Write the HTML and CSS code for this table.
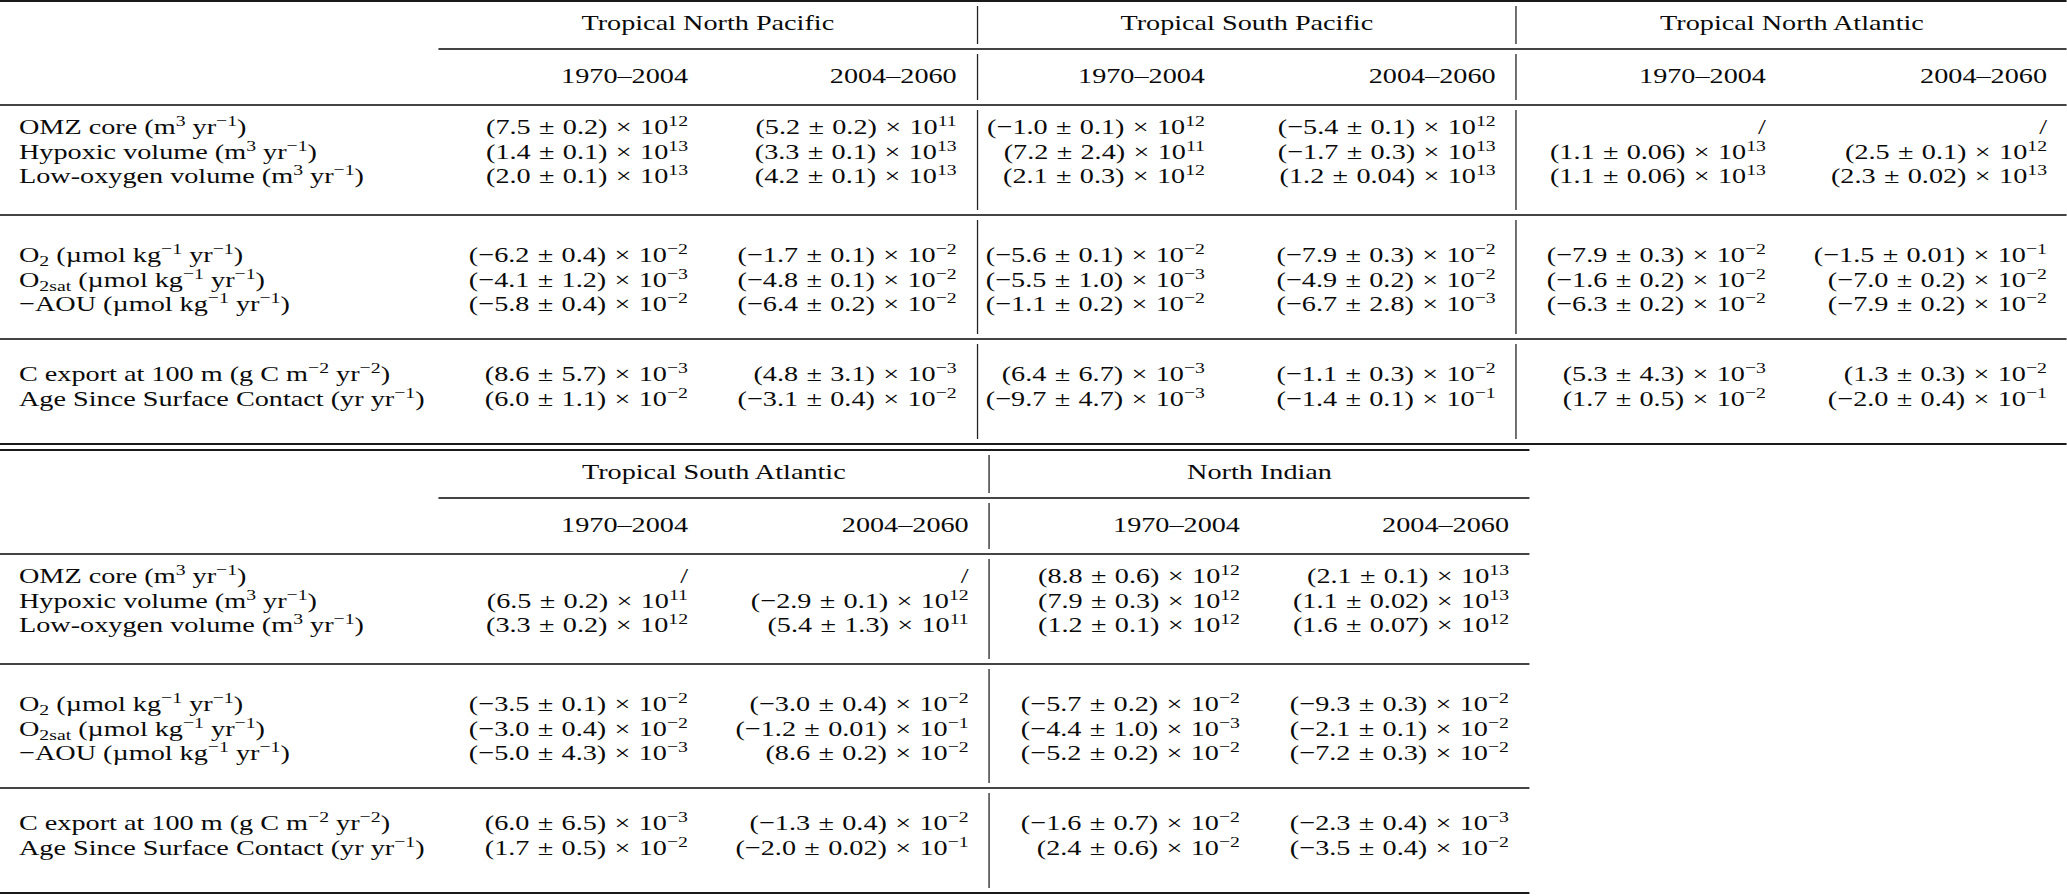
FILE: index.html
```html
<!DOCTYPE html>
<html lang="en">
<head>
<meta charset="utf-8">
<title>Trends by region</title>
<link rel="stylesheet" href="styles.css">
</head>
<body>
<main class="page">
<table class="tbl t1">
  <colgroup>
    <col class="w439"><col class="w269"><col class="w270"><col class="w247"><col class="w292"><col class="w269"><col class="w281">
  </colgroup>
  <tbody>
    <tr class="rl"><td class="rc rc-top" colspan="7"><div class="ln ln-heavy"></div></td></tr>
    <tr class="r-grp"><th class="lab"></th><th class="grp bar" colspan="2">Tropical North Pacific</th><th class="grp bar" colspan="2">Tropical South Pacific</th><th class="grp" colspan="2">Tropical North Atlantic</th></tr>
    <tr class="rl"><td class="rc"></td><td class="rc" colspan="6"><div class="ln"></div></td></tr>
    <tr class="r-yr"><th class="lab"></th><th>1970–2004</th><th class="bar">2004–2060</th><th>1970–2004</th><th class="bar">2004–2060</th><th>1970–2004</th><th>2004–2060</th></tr>
    <tr class="rl"><td class="rc" colspan="7"><div class="ln"></div></td></tr>

    <tr class="g1-start"><td class="lab">OMZ core (m<sup>3</sup> yr<sup>−1</sup>)</td><td>(7.5 ± 0.2) × 10<sup>12</sup></td><td class="bar">(5.2 ± 0.2) × 10<sup>11</sup></td><td>(−1.0 ± 0.1) × 10<sup>12</sup></td><td class="bar">(−5.4 ± 0.1) × 10<sup>12</sup></td><td>/</td><td>/</td></tr>
    <tr><td class="lab">Hypoxic volume (m<sup>3</sup> yr<sup>−1</sup>)</td><td>(1.4 ± 0.1) × 10<sup>13</sup></td><td class="bar">(3.3 ± 0.1) × 10<sup>13</sup></td><td>(7.2 ± 2.4) × 10<sup>11</sup></td><td class="bar">(−1.7 ± 0.3) × 10<sup>13</sup></td><td>(1.1 ± 0.06) × 10<sup>13</sup></td><td>(2.5 ± 0.1) × 10<sup>12</sup></td></tr>
    <tr class="g1-end"><td class="lab">Low-oxygen volume (m<sup>3</sup> yr<sup>−1</sup>)</td><td>(2.0 ± 0.1) × 10<sup>13</sup></td><td class="bar">(4.2 ± 0.1) × 10<sup>13</sup></td><td>(2.1 ± 0.3) × 10<sup>12</sup></td><td class="bar">(1.2 ± 0.04) × 10<sup>13</sup></td><td>(1.1 ± 0.06) × 10<sup>13</sup></td><td>(2.3 ± 0.02) × 10<sup>13</sup></td></tr>
    <tr class="rl"><td class="rc" colspan="7"><div class="ln"></div></td></tr>

    <tr class="g2-start"><td class="lab">O<sub>2</sub> (µmol kg<sup>−1</sup> yr<sup>−1</sup>)</td><td>(−6.2 ± 0.4) × 10<sup>−2</sup></td><td class="bar">(−1.7 ± 0.1) × 10<sup>−2</sup></td><td>(−5.6 ± 0.1) × 10<sup>−2</sup></td><td class="bar">(−7.9 ± 0.3) × 10<sup>−2</sup></td><td>(−7.9 ± 0.3) × 10<sup>−2</sup></td><td>(−1.5 ± 0.01) × 10<sup>−1</sup></td></tr>
    <tr><td class="lab">O<sub>2sat</sub> (µmol kg<sup>−1</sup> yr<sup>−1</sup>)</td><td>(−4.1 ± 1.2) × 10<sup>−3</sup></td><td class="bar">(−4.8 ± 0.1) × 10<sup>−2</sup></td><td>(−5.5 ± 1.0) × 10<sup>−3</sup></td><td class="bar">(−4.9 ± 0.2) × 10<sup>−2</sup></td><td>(−1.6 ± 0.2) × 10<sup>−2</sup></td><td>(−7.0 ± 0.2) × 10<sup>−2</sup></td></tr>
    <tr class="g2-end"><td class="lab">−AOU (µmol kg<sup>−1</sup> yr<sup>−1</sup>)</td><td>(−5.8 ± 0.4) × 10<sup>−2</sup></td><td class="bar">(−6.4 ± 0.2) × 10<sup>−2</sup></td><td>(−1.1 ± 0.2) × 10<sup>−2</sup></td><td class="bar">(−6.7 ± 2.8) × 10<sup>−3</sup></td><td>(−6.3 ± 0.2) × 10<sup>−2</sup></td><td>(−7.9 ± 0.2) × 10<sup>−2</sup></td></tr>
    <tr class="rl"><td class="rc" colspan="7"><div class="ln"></div></td></tr>

    <tr class="g3-start"><td class="lab">C export at 100 m (g C m<sup>−2</sup> yr<sup>−2</sup>)</td><td>(8.6 ± 5.7) × 10<sup>−3</sup></td><td class="bar">(4.8 ± 3.1) × 10<sup>−3</sup></td><td>(6.4 ± 6.7) × 10<sup>−3</sup></td><td class="bar">(−1.1 ± 0.3) × 10<sup>−2</sup></td><td>(5.3 ± 4.3) × 10<sup>−3</sup></td><td>(1.3 ± 0.3) × 10<sup>−2</sup></td></tr>
    <tr class="g3-end"><td class="lab">Age Since Surface Contact (yr yr<sup>−1</sup>)</td><td>(6.0 ± 1.1) × 10<sup>−2</sup></td><td class="bar">(−3.1 ± 0.4) × 10<sup>−2</sup></td><td>(−9.7 ± 4.7) × 10<sup>−3</sup></td><td class="bar">(−1.4 ± 0.1) × 10<sup>−1</sup></td><td>(1.7 ± 0.5) × 10<sup>−2</sup></td><td>(−2.0 ± 0.4) × 10<sup>−1</sup></td></tr>
    <tr class="rl"><td class="rc rc-bot" colspan="7"><div class="ln ln-heavy"></div></td></tr>
  </tbody>
</table>

<table class="tbl t2">
  <colgroup>
    <col class="w439"><col class="w269"><col class="w282"><col class="w270"><col class="w269">
  </colgroup>
  <tbody>
    <tr class="rl"><td class="rc rc-top" colspan="5"><div class="ln ln-heavy"></div></td></tr>
    <tr class="r-grp"><th class="lab"></th><th class="grp bar" colspan="2">Tropical South Atlantic</th><th class="grp" colspan="2">North Indian</th></tr>
    <tr class="rl"><td class="rc"></td><td class="rc" colspan="4"><div class="ln"></div></td></tr>
    <tr class="r-yr"><th class="lab"></th><th>1970–2004</th><th class="bar">2004–2060</th><th>1970–2004</th><th>2004–2060</th></tr>
    <tr class="rl"><td class="rc" colspan="5"><div class="ln"></div></td></tr>

    <tr class="g1-start"><td class="lab">OMZ core (m<sup>3</sup> yr<sup>−1</sup>)</td><td>/</td><td class="bar">/</td><td>(8.8 ± 0.6) × 10<sup>12</sup></td><td>(2.1 ± 0.1) × 10<sup>13</sup></td></tr>
    <tr><td class="lab">Hypoxic volume (m<sup>3</sup> yr<sup>−1</sup>)</td><td>(6.5 ± 0.2) × 10<sup>11</sup></td><td class="bar">(−2.9 ± 0.1) × 10<sup>12</sup></td><td>(7.9 ± 0.3) × 10<sup>12</sup></td><td>(1.1 ± 0.02) × 10<sup>13</sup></td></tr>
    <tr class="g1-end"><td class="lab">Low-oxygen volume (m<sup>3</sup> yr<sup>−1</sup>)</td><td>(3.3 ± 0.2) × 10<sup>12</sup></td><td class="bar">(5.4 ± 1.3) × 10<sup>11</sup></td><td>(1.2 ± 0.1) × 10<sup>12</sup></td><td>(1.6 ± 0.07) × 10<sup>12</sup></td></tr>
    <tr class="rl"><td class="rc" colspan="5"><div class="ln"></div></td></tr>

    <tr class="g2-start"><td class="lab">O<sub>2</sub> (µmol kg<sup>−1</sup> yr<sup>−1</sup>)</td><td>(−3.5 ± 0.1) × 10<sup>−2</sup></td><td class="bar">(−3.0 ± 0.4) × 10<sup>−2</sup></td><td>(−5.7 ± 0.2) × 10<sup>−2</sup></td><td>(−9.3 ± 0.3) × 10<sup>−2</sup></td></tr>
    <tr><td class="lab">O<sub>2sat</sub> (µmol kg<sup>−1</sup> yr<sup>−1</sup>)</td><td>(−3.0 ± 0.4) × 10<sup>−2</sup></td><td class="bar">(−1.2 ± 0.01) × 10<sup>−1</sup></td><td>(−4.4 ± 1.0) × 10<sup>−3</sup></td><td>(−2.1 ± 0.1) × 10<sup>−2</sup></td></tr>
    <tr class="g2-end"><td class="lab">−AOU (µmol kg<sup>−1</sup> yr<sup>−1</sup>)</td><td>(−5.0 ± 4.3) × 10<sup>−3</sup></td><td class="bar">(8.6 ± 0.2) × 10<sup>−2</sup></td><td>(−5.2 ± 0.2) × 10<sup>−2</sup></td><td>(−7.2 ± 0.3) × 10<sup>−2</sup></td></tr>
    <tr class="rl"><td class="rc" colspan="5"><div class="ln"></div></td></tr>

    <tr class="g3-start"><td class="lab">C export at 100 m (g C m<sup>−2</sup> yr<sup>−2</sup>)</td><td>(6.0 ± 6.5) × 10<sup>−3</sup></td><td class="bar">(−1.3 ± 0.4) × 10<sup>−2</sup></td><td>(−1.6 ± 0.7) × 10<sup>−2</sup></td><td>(−2.3 ± 0.4) × 10<sup>−3</sup></td></tr>
    <tr class="g3-end"><td class="lab">Age Since Surface Contact (yr yr<sup>−1</sup>)</td><td>(1.7 ± 0.5) × 10<sup>−2</sup></td><td class="bar">(−2.0 ± 0.02) × 10<sup>−1</sup></td><td>(2.4 ± 0.6) × 10<sup>−2</sup></td><td>(−3.5 ± 0.4) × 10<sup>−2</sup></td></tr>
    <tr class="rl"><td class="rc rc-bot" colspan="5"><div class="ln ln-heavy"></div></td></tr>
  </tbody>
</table>
</main>
</body>
</html>
```

FILE: styles.css
```css
* { box-sizing: border-box; }

:root {
  /* the source table is typeset wide: glyphs are stretched horizontally */
  --sx: 1.282;
}

html, body {
  margin: 0;
  padding: 0;
  background: #ffffff;
}

body {
  width: 2067px;
  height: 896px;
  overflow: hidden;
  font-family: "Liberation Serif", "Times New Roman", serif;
  color: #0a0a0a;
}

.page {
  display: flex;
  flex-direction: column;
  align-items: flex-start;
  gap: 4px;
  width: calc(2067px / var(--sx));
  transform: scaleX(var(--sx));
  transform-origin: 0 0;
}

.tbl {
  border-collapse: separate;
  border-spacing: 0;
  table-layout: fixed;
  font-size: 22px;
}

.t1 { width: calc(2067px / var(--sx)); }
.t2 { width: calc(1529px / var(--sx)); }

.w439 { width: calc(439px / var(--sx)); }
.w247 { width: calc(247px / var(--sx)); }
.w269 { width: calc(269px / var(--sx)); }
.w270 { width: calc(270px / var(--sx)); }
.w281 { width: calc(281px / var(--sx)); }
.w282 { width: calc(282px / var(--sx)); }
.w292 { width: calc(292px / var(--sx)); }

.tbl th,
.tbl td {
  padding: 0 calc(20px / var(--sx)) 0 0;
  line-height: 24.5px;
  white-space: nowrap;
  text-align: right;
  font-weight: normal;
  vertical-align: top;
  word-spacing: 1px;
}

.tbl .lab {
  text-align: left;
  padding-left: calc(19px / var(--sx));
  word-spacing: 0;
}

.tbl .grp {
  text-align: center;
  padding-right: 0;
  word-spacing: 0;
}

.tbl .bar {
  border-right: 1px solid #222222;
}

/* booktabs-like rules */
.tbl td.rc {
  padding: 4px 0;
  line-height: 0;
}

.tbl td.rc-top { padding: 0 0 4px; }
.tbl td.rc-bot { padding: 4px 0 0; }

.ln {
  height: 2px;
  background: #444444;
}

.ln-heavy {
  background: #1a1a1a;
}

/* row spacing inside groups */
.tbl .r-grp > * { padding-top: 5px; padding-bottom: 8.5px; }
.tbl .r-yr > * { padding-top: 10px; padding-bottom: 11.5px; }
.tbl .g1-start > * { padding-top: 5px; }
.tbl .g1-end > * { padding-bottom: 21.5px; }
.tbl .g2-start > * { padding-top: 23px; }
.tbl .g2-end > * { padding-bottom: 17.5px; }
.tbl .g3-start > * { padding-top: 18px; }
.tbl .g3-end > * { padding-bottom: 28px; }

.tbl sup {
  font-size: 0.7em;
  vertical-align: 0.5em;
  line-height: 0;
}

.tbl sub {
  font-size: 0.7em;
  vertical-align: -0.25em;
  line-height: 0;
}
```
